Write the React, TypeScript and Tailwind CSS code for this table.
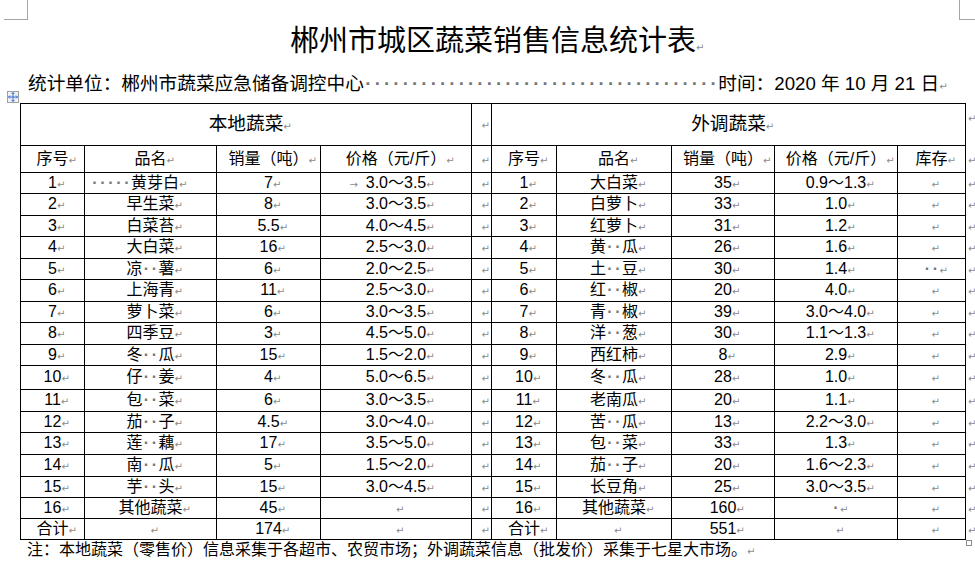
import React from 'react';

function Ret() {
  return (
    <span className="inline-block w-0 leading-none whitespace-nowrap">
      <span className="font-['DejaVu_Sans',sans-serif] text-[10px] leading-none text-[#8a8a8a]">↵</span>
    </span>
  );
}

function Dot() {
  return <span className="inline-block w-[0.5em] leading-none text-center font-bold text-[#777777]">·</span>;
}

function Txt({ s, ret = true }: { s: string; ret?: boolean }) {
  const parts: React.ReactNode[] = [];
  let buf = '';
  s.split('').forEach((ch, i) => {
    if (ch === '·') {
      if (buf) {
        parts.push(<span key={'t' + i}>{buf}</span>);
        buf = '';
      }
      parts.push(<Dot key={'d' + i} />);
    } else buf += ch;
  });
  if (buf) parts.push(<span key="end">{buf}</span>);
  return (
    <>
      {parts}
      {ret && <Ret />}
    </>
  );
}

const local: [string, string, string, string][] = [
  ['1', '·····黄芽白', '7', '3.0～3.5'],
  ['2', '早生菜', '8', '3.0～3.5'],
  ['3', '白菜苔', '5.5', '4.0～4.5'],
  ['4', '大白菜', '16', '2.5～3.0'],
  ['5', '凉··薯', '6', '2.0～2.5'],
  ['6', '上海青', '11', '2.5～3.0'],
  ['7', '萝卜菜', '6', '3.0～3.5'],
  ['8', '四季豆', '3', '4.5～5.0'],
  ['9', '冬··瓜', '15', '1.5～2.0'],
  ['10', '仔··姜', '4', '5.0～6.5'],
  ['11', '包··菜', '6', '3.0～3.5'],
  ['12', '茄··子', '4.5', '3.0～4.0'],
  ['13', '莲··藕', '17', '3.5～5.0'],
  ['14', '南··瓜', '5', '1.5～2.0'],
  ['15', '芋··头', '15', '3.0～4.5'],
  ['16', '其他蔬菜', '45', ''],
  ['合计', '', '174', ''],
];

const remote: [string, string, string, string, string][] = [
  ['1', '大白菜', '35', '0.9～1.3', ''],
  ['2', '白萝卜', '33', '1.0', ''],
  ['3', '红萝卜', '31', '1.2', ''],
  ['4', '黄··瓜', '26', '1.6', ''],
  ['5', '土··豆', '30', '1.4', '··'],
  ['6', '红··椒', '20', '4.0', ''],
  ['7', '青··椒', '39', '3.0～4.0', ''],
  ['8', '洋··葱', '30', '1.1～1.3', ''],
  ['9', '西红柿', '8', '2.9', ''],
  ['10', '冬··瓜', '28', '1.0', ''],
  ['11', '老南瓜', '20', '1.1', ''],
  ['12', '苦··瓜', '13', '2.2～3.0', ''],
  ['13', '包··菜', '33', '1.3', ''],
  ['14', '茄··子', '20', '1.6～2.3', ''],
  ['15', '长豆角', '25', '3.0～3.5', ''],
  ['16', '其他蔬菜', '160', '·', ''],
  ['合计', '', '551', '', ''],
];

const heights = [
  'h-[21px]', 'h-[22px]', 'h-[21px]', 'h-[22px]', 'h-[21px]', 'h-[22px]', 'h-[21px]', 'h-[22px]', 'h-[21px]',
  'h-[24px]', 'h-[22px]', 'h-[21px]', 'h-[22px]', 'h-[22px]', 'h-[21px]', 'h-[21px]', 'h-[21px]',
];

const cell = 'border border-black p-0 text-center align-middle whitespace-nowrap';
const cellLeft = 'border border-black p-0 pl-[6px] text-left align-middle whitespace-nowrap';
const endCell = 'border-0 p-0 pl-[2px] text-left align-middle whitespace-nowrap';

export default function App() {
  return (
    <div className="relative w-[975px] h-[567px] overflow-hidden bg-white text-black font-['Liberation_Sans','Noto_Sans_CJK_SC',sans-serif]">
      {/* page corner marks */}
      <div className="absolute left-[4px] top-0 w-[24px] h-[20px] border-r border-b border-[#a6a6a6]" />
      <div className="absolute left-[959px] top-0 w-[16px] h-[20px] border-l border-b border-[#a6a6a6]" />

      {/* title */}
      <div className="pt-[27px] pl-[290px] text-[29px] leading-[29px] whitespace-nowrap">
        郴州市城区蔬菜销售信息统计表
        <Ret />
      </div>

      {/* subtitle */}
      <div className="mt-[18px] pl-[28px] text-[18.67px] leading-[19px] whitespace-nowrap">
        <Txt s={'统计单位：郴州市蔬菜应急储备调控中心' + '·'.repeat(38) + '时间：2020 年 10 月 21 日'} />
      </div>

      {/* table move handle */}
      <div className="absolute left-[7px] top-[91px] w-[12px] h-[12px] border border-[#a0a0a0] bg-[#f2f2f2] flex items-center justify-center">
        <svg width="10" height="10" viewBox="0 0 10 10" fill="none" stroke="#2f6fd0" strokeWidth="1">
          <path d="M5 0.5V9.5M0.5 5H9.5" />
          <path d="M3.5 2L5 0.5L6.5 2M3.5 8L5 9.5L6.5 8M2 3.5L0.5 5L2 6.5M8 3.5L9.5 5L8 6.5" />
        </svg>
      </div>

      {/* table */}
      <table className="mt-[9px] ml-[20px] border-collapse table-fixed w-[955px] text-[16px] leading-[20px]">
        <colgroup>
          <col className="w-[64px]" />
          <col className="w-[132px]" />
          <col className="w-[104px]" />
          <col className="w-[151px]" />
          <col className="w-[20px]" />
          <col className="w-[65px]" />
          <col className="w-[115px]" />
          <col className="w-[103px]" />
          <col className="w-[123px]" />
          <col className="w-[68px]" />
          <col className="w-[10px]" />
        </colgroup>
        <tbody>
          <tr className="h-[42px]">
            <td colSpan={4} className={cell + ' text-[18.67px]'}>
              <Txt s="本地蔬菜" />
            </td>
            <td className={cell}>
              <Ret />
            </td>
            <td colSpan={5} className={cell + ' text-[18.67px]'}>
              <Txt s="外调蔬菜" />
            </td>
            <td className="border-0 p-0 pl-[2px] pt-[4px] text-left align-top">
              <Ret />
            </td>
          </tr>
          <tr className="h-[27px]">
            <td className={cell}><Txt s="序号" /></td>
            <td className={cell}><Txt s="品名" /></td>
            <td className={cell}><Txt s="销量（吨）" /></td>
            <td className={cell}><Txt s="价格（元/斤）" /></td>
            <td className={cell}><Ret /></td>
            <td className={cell}><Txt s="序号" /></td>
            <td className={cell}><Txt s="品名" /></td>
            <td className={cell}><Txt s="销量（吨）" /></td>
            <td className={cell}><Txt s="价格（元/斤）" /></td>
            <td className={cell}><Txt s="库存" /></td>
            <td className={endCell}><Ret /></td>
          </tr>
          {local.map((l, i) => {
            const r = remote[i];
            return (
              <tr key={i} className={heights[i]}>
                <td className={cell}><Txt s={l[0]} /></td>
                <td className={i === 0 ? cellLeft : cell}><Txt s={l[1]} /></td>
                <td className={cell}><Txt s={l[2]} /></td>
                <td className={cell}>
                  {i === 0 && (
                    <span className="inline-block w-0 leading-none">
                      <span className="inline-block -ml-[24px] font-['DejaVu_Sans',sans-serif] text-[10px] leading-none text-[#8a8a8a]">→</span>
                    </span>
                  )}
                  <Txt s={l[3]} />
                </td>
                <td className={cell}><Ret /></td>
                <td className={cell}><Txt s={r[0]} /></td>
                <td className={cell}><Txt s={r[1]} /></td>
                <td className={cell}><Txt s={r[2]} /></td>
                <td className={cell}><Txt s={r[3]} /></td>
                <td className={cell}><Txt s={r[4]} /></td>
                <td className={endCell}><Ret /></td>
              </tr>
            );
          })}
        </tbody>
      </table>

      {/* table resize handle */}
      <div className="absolute left-[966px] top-[540px] w-[6px] h-[6px] border border-[#8a8a8a]" />

      {/* note */}
      <div className="pl-[27px] text-[16px] leading-[20px] whitespace-nowrap">
        注：本地蔬菜（零售价）信息采集于各超市、农贸市场；外调蔬菜信息（批发价）采集于七星大市场。
        <Ret />
      </div>
    </div>
  );
}
